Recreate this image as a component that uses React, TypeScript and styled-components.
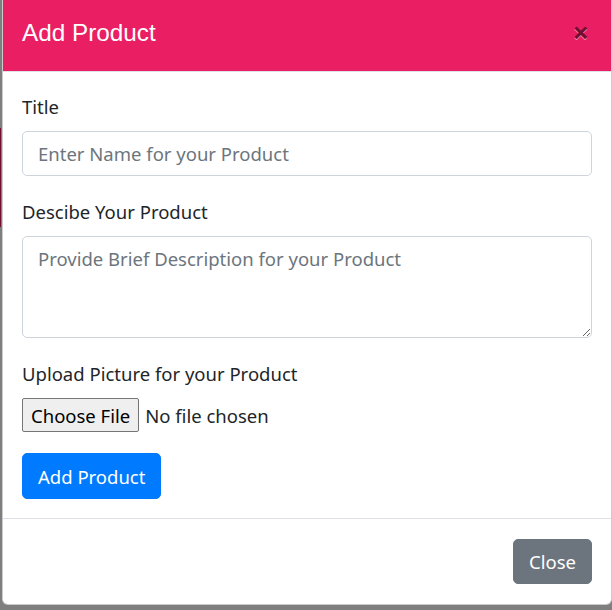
import styled, { createGlobalStyle } from "styled-components";

const GlobalStyle = createGlobalStyle`
    html, body {
        margin: 0;
        padding: 0;
        background: #7f7f7f;
        overflow: hidden;
    }
    * {
        box-sizing: border-box;
    }
`;

const BODY_FONT = `"Segoe UI", "Noto Sans", "Open Sans", sans-serif`;
const TEXT_SIZE = "18.5px";

const Backdrop = styled("div")`
    position: relative;
    width: 612px;
    height: 610px;
    background: #7f7f7f;
    padding-left: 2px;
`;

// bits of the page under the dimmed backdrop
const Behind = styled("div")<{ $left: number; $top: number; $w: number; $h: number }>`
    position: absolute;
    left: ${(p) => p.$left}px;
    top: ${(p) => p.$top}px;
    width: ${(p) => p.$w}px;
    height: ${(p) => p.$h}px;
    background: #74102f;
`;

const Modal = styled("div")`
    position: relative;
    z-index: 1;
    width: 610px;
    margin-top: -5px;
    background: #fff;
    border: 1px solid rgba(0, 0, 0, 0.2);
    border-radius: 6px;
    overflow: hidden;
    font-family: ${BODY_FONT};
    color: #212529;
`;

const Header = styled("div")`
    display: flex;
    align-items: flex-start;
    justify-content: space-between;
    padding: 19px 19px 20px 19px;
    background: #e91e63;
    border-bottom: 1px solid #dee2e6;
`;

const Title = styled("h5")`
    margin: 0;
    font-family: "Liberation Sans", Arial, sans-serif;
    font-size: 24.3px;
    font-weight: 400;
    line-height: 36px;
    color: #fff;
`;

const CloseX = styled("button")`
    margin: 0 0 0 auto;
    padding: 0 3px 0 0;
    background: transparent;
    border: 0;
    font-family: ${BODY_FONT};
    font-size: 29px;
    font-weight: 700;
    line-height: 34px;
    color: #000;
    text-shadow: 0 1px 0 #fff;
    opacity: 0.5;
    cursor: pointer;
`;

const Body = styled("form")`
    display: flex;
    flex-direction: column;
    padding: 20px 19px 19px;
`;

const Group = styled("div")`
    display: flex;
    flex-direction: column;
    margin-bottom: 21px;
`;

const Label = styled("label")`
    font-size: ${TEXT_SIZE};
    line-height: 29px;
    margin-bottom: 10px;
`;

const Input = styled("input")`
    width: 100%;
    height: 45px;
    padding: 7px 15px;
    font-family: ${BODY_FONT};
    font-size: ${TEXT_SIZE};
    color: #495057;
    border: 1px solid #ced4da;
    border-radius: 5px;
    outline: none;
    &::placeholder {
        color: #6c757d;
    }
`;

const TextArea = styled("textarea")`
    width: 100%;
    height: 102px;
    padding: 7px 15px;
    font-family: ${BODY_FONT};
    font-size: ${TEXT_SIZE};
    line-height: 29px;
    color: #495057;
    border: 1px solid #ced4da;
    border-radius: 5px;
    outline: none;
    resize: vertical;
    &::placeholder {
        color: #6c757d;
    }
`;

const FileInput = styled("input")`
    display: block;
    width: 100%;
    height: 34px;
    font-family: ${BODY_FONT};
    font-size: ${TEXT_SIZE};
    color: #212529;
    &::file-selector-button {
        font-family: ${BODY_FONT};
        font-size: ${TEXT_SIZE};
        height: 34px;
        padding: 0 8px;
        margin-right: 6px;
        color: #000;
        background: #efefef;
        border: 1px solid #767676;
        border-radius: 2px;
    }
`;

const Button = styled("button")<{ $variant: "primary" | "secondary" }>`
    height: 46px;
    padding: 0 15px;
    font-family: ${BODY_FONT};
    font-size: ${TEXT_SIZE};
    line-height: 29px;
    color: #fff;
    background: ${(p) => (p.$variant === "primary" ? "#007bff" : "#6c757d")};
    border: 1px solid ${(p) => (p.$variant === "primary" ? "#007bff" : "#6c757d")};
    border-radius: 5px;
    cursor: pointer;
`;

const SubmitRow = styled("div")`
    display: flex;
`;

const Footer = styled("div")`
    display: flex;
    justify-content: flex-end;
    padding: 15px 14px;
    border-top: 1px solid #dee2e6;
    & > ${Button} {
        margin: 5px;
        height: 45px;
    }
`;

const App = () => {
    return (
        <>
            <GlobalStyle />
            <Backdrop>
                <Behind $left={0} $top={133} $w={1} $h={99} />
                <Behind $left={227} $top={605} $w={1} $h={5} />
                <Behind $left={412} $top={605} $w={1} $h={5} />
                <Modal>
                    <Header>
                        <Title>Add Product</Title>
                        <CloseX type="button" aria-label="Close">
                            ×
                        </CloseX>
                    </Header>
                    <Body onSubmit={(e) => e.preventDefault()}>
                        <Group>
                            <Label htmlFor="title">Title</Label>
                            <Input
                                id="title"
                                type="text"
                                placeholder="Enter Name for your Product"
                            />
                        </Group>
                        <Group>
                            <Label htmlFor="desc">Descibe Your Product</Label>
                            <TextArea
                                id="desc"
                                rows={3}
                                placeholder="Provide Brief Description for your Product"
                            />
                        </Group>
                        <Group>
                            <Label htmlFor="pic">Upload Picture for your Product</Label>
                            <FileInput id="pic" type="file" />
                        </Group>
                        <SubmitRow>
                            <Button type="submit" $variant="primary">
                                Add Product
                            </Button>
                        </SubmitRow>
                    </Body>
                    <Footer>
                        <Button type="button" $variant="secondary">
                            Close
                        </Button>
                    </Footer>
                </Modal>
            </Backdrop>
        </>
    );
};

export default App;
